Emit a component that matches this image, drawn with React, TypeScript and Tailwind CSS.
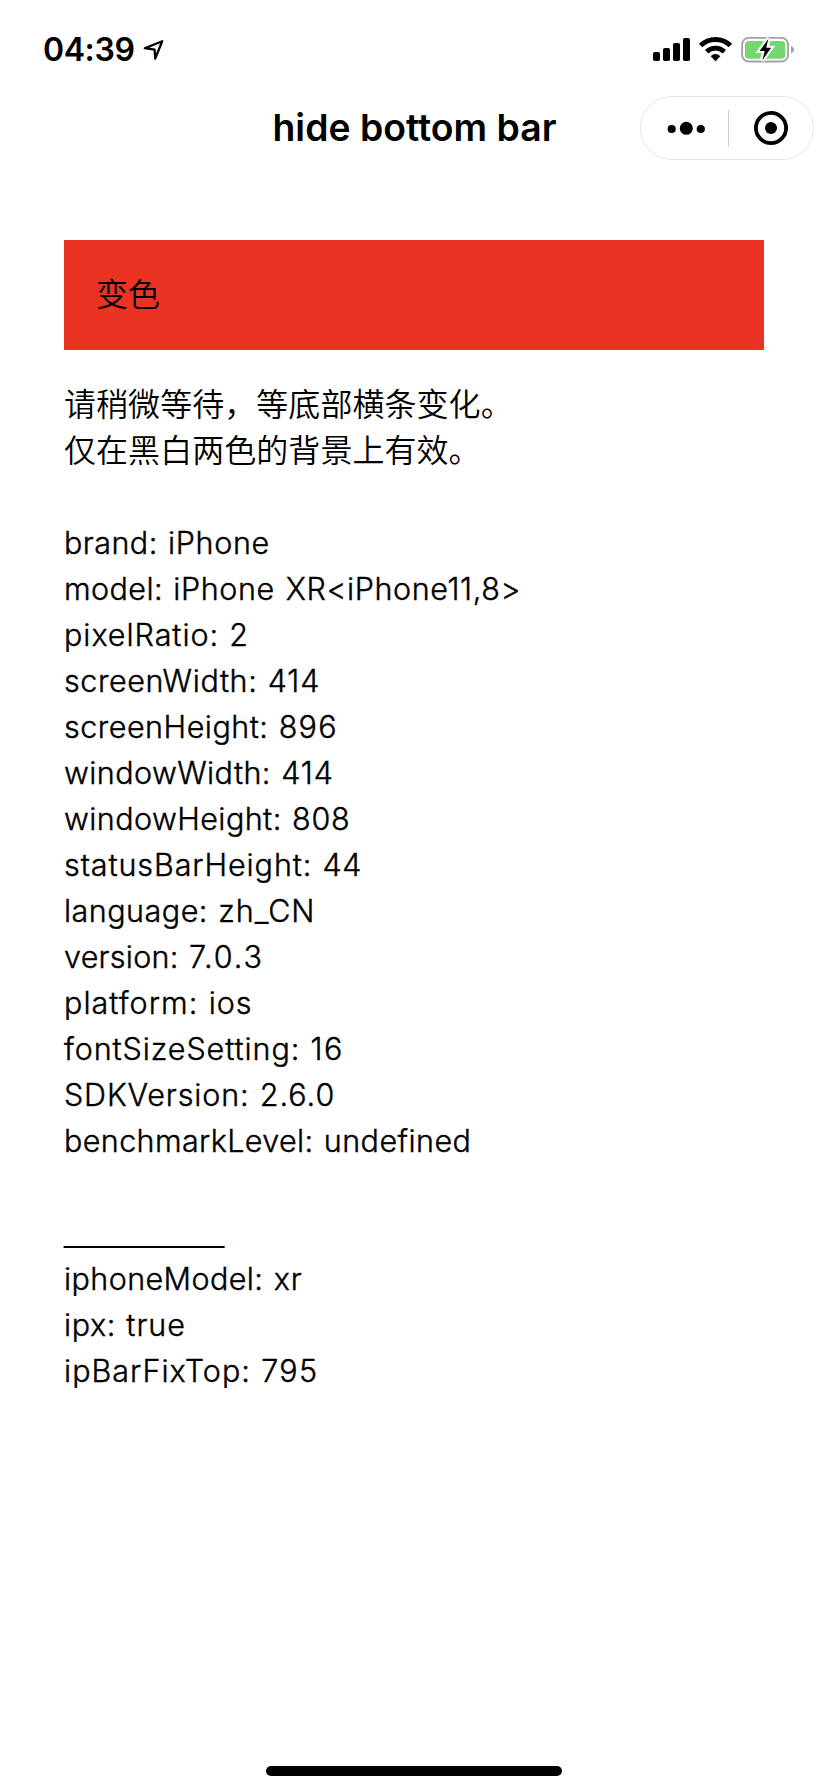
type Field = {
  label: string;
  value: string;
  labelTracking: string;
  valueTracking: string;
};

const systemInfo: Field[] = [
  { label: "brand:", value: "iPhone", labelTracking: "tracking-[0.45px]", valueTracking: "tracking-[0.65px]" },
  { label: "model:", value: "iPhone XR<iPhone11,8>", labelTracking: "tracking-[0.42px]", valueTracking: "tracking-[0.6px]" },
  { label: "pixelRatio:", value: "2", labelTracking: "tracking-[0.95px]", valueTracking: "tracking-normal" },
  { label: "screenWidth:", value: "414", labelTracking: "tracking-[0.6px]", valueTracking: "tracking-[1px]" },
  { label: "screenHeight:", value: "896", labelTracking: "tracking-[0.5px]", valueTracking: "tracking-[1.2px]" },
  { label: "windowWidth:", value: "414", labelTracking: "tracking-[0.42px]", valueTracking: "tracking-[1px]" },
  { label: "windowHeight:", value: "808", labelTracking: "tracking-[0.43px]", valueTracking: "tracking-[0.8px]" },
  { label: "statusBarHeight:", value: "44", labelTracking: "tracking-[0.9px]", valueTracking: "tracking-[0.6px]" },
  { label: "language:", value: "zh_CN", labelTracking: "tracking-[0.48px]", valueTracking: "tracking-[1px]" },
  { label: "version:", value: "7.0.3", labelTracking: "tracking-[0.27px]", valueTracking: "tracking-[1.9px]" },
  { label: "platform:", value: "ios", labelTracking: "tracking-[1.04px]", valueTracking: "tracking-[1px]" },
  { label: "fontSizeSetting:", value: "16", labelTracking: "tracking-[0.92px]", valueTracking: "tracking-[1.4px]" },
  { label: "SDKVersion:", value: "2.6.0", labelTracking: "tracking-[0.85px]", valueTracking: "tracking-[1px]" },
  { label: "benchmarkLevel:", value: "undefined", labelTracking: "tracking-[0.38px]", valueTracking: "tracking-[0.45px]" },
];

const deviceInfo: Field[] = [
  { label: "iphoneModel:", value: "xr", labelTracking: "tracking-[0.41px]", valueTracking: "tracking-[1px]" },
  { label: "ipx:", value: "true", labelTracking: "tracking-[0.6px]", valueTracking: "tracking-[1px]" },
  { label: "ipBarFixTop:", value: "795", labelTracking: "tracking-[1.02px]", valueTracking: "tracking-[1.3px]" },
];

function StatusIcons() {
  return (
    <svg className="h-[27px] w-[142px]" viewBox="653 36 142 27" fill="none">
      <g fill="black">
        <rect x="653" y="52" width="7" height="9" rx="1.8" />
        <rect x="663" y="48" width="7" height="13" rx="1.8" />
        <rect x="673" y="43" width="7" height="18" rx="1.8" />
        <rect x="683" y="38" width="7" height="23" rx="1.8" />
      </g>
      <g stroke="black">
        <path d="M700.6 45.6A21.1 21.1 0 0 1 730.4 45.6" strokeWidth="5" />
        <path d="M706.7 51.7A12.4 12.4 0 0 1 724.3 51.7" strokeWidth="4.8" />
      </g>
      <path d="M715.5 61 711 56.2A6.4 6.4 0 0 1 720 56.2Z" fill="black" stroke="black" strokeWidth="0.6" strokeLinejoin="round" />
      <rect x="742.1" y="37.9" width="46" height="23.6" rx="6.6" stroke="#a3a3a3" strokeWidth="1.9" />
      <path d="M791 46C792.9 46.6 794.1 48 794.1 49.6S792.9 52.8 791 53.3Z" fill="#a3a3a3" />
      <rect x="745" y="41" width="40.3" height="17.7" rx="3.8" fill="#76d672" />
      <path
        d="M768.6 38.5 759.6 50.9H764.4L762 60.6 771.2 47.8H766.6Z"
        fill="white"
        stroke="white"
        strokeWidth="4.2"
        strokeLinejoin="miter"
      />
      <path d="M768.4 38.8 759.6 51H764.7L762.4 60.2 771.2 47.7H766.2Z" fill="black" />
    </svg>
  );
}

function StatusBar() {
  return (
    <header className="flex h-[88px] items-start justify-between pt-[30px] pr-[33px] pl-[43px]">
      <div className="flex items-start">
        <span className="text-[32px] leading-[40px] font-semibold tracking-[-0.4px]">04:39</span>
        <svg className="mt-2 ml-2 h-[24px] w-[24px]" viewBox="0 0 24 24" fill="none">
          <path
            d="M2.8 10.2 20.2 3.2 13.2 20.6 12.6 11.6Z"
            stroke="black"
            strokeWidth="2.3"
            strokeLinejoin="round"
          />
        </svg>
      </div>
      <div className="pt-[6px]">
        <StatusIcons />
      </div>
    </header>
  );
}

function Capsule() {
  return (
    <div className="flex h-16 w-[174px] items-center rounded-full border border-[#e6e6e6]">
      <div className="flex flex-1 justify-center pl-[3px]">
        <svg className="h-[14px] w-[38px]" viewBox="0 0 38 14">
          <circle cx="4.7" cy="8" r="4.1" />
          <circle cx="19.3" cy="7.3" r="6.5" />
          <circle cx="33.8" cy="8" r="4.1" />
        </svg>
      </div>
      <div className="h-[37px] w-px bg-[#cfcfcf]" />
      <div className="flex flex-1 justify-center">
        <svg className="h-[34px] w-[34px]" viewBox="0 0 34 34">
          <circle cx="17" cy="17" r="15.1" fill="none" stroke="black" strokeWidth="3.8" />
          <circle cx="17" cy="17" r="6" />
        </svg>
      </div>
    </div>
  );
}

function NavBar() {
  return (
    <nav className="grid h-20 grid-cols-[1fr_auto_1fr] items-center pr-[14px]">
      <div />
      <h1 className="pl-[15px] text-[37.3px] leading-[50px] font-semibold tracking-[0.02px]">hide bottom bar</h1>
      <div className="flex justify-end">
        <Capsule />
      </div>
    </nav>
  );
}

function InfoList({ fields }: { fields: Field[] }) {
  return (
    <ul className="text-[30.5px] leading-[46px] font-light [-webkit-text-stroke:0.4px_black]">
      {fields.map((f) => (
        <li key={f.label} className="h-[46px] whitespace-nowrap [word-spacing:1.7px]">
          <span className={f.labelTracking}>{f.label}</span> <span className={f.valueTracking}>{f.value}</span>
        </li>
      ))}
    </ul>
  );
}

export default function App() {
  return (
    <div className="flex h-[1792px] w-[828px] flex-col bg-white font-['Inter','Noto_Sans_CJK_SC',sans-serif] text-black">
      <StatusBar />
      <NavBar />
      <main className="flex-1 px-16 pt-[72px] text-[32px] leading-[46px] font-[350]">
        <div className="mb-8 bg-[#eb3323] p-8">变色</div>
        <div className="mb-[46px] tracking-[0.05px]">
          <p>请稍微等待，等底部横条变化。</p>
          <p>仅在黑白两色的背景上有效。</p>
        </div>
        <InfoList fields={systemInfo} />
        <p className="mt-[45px] mb-px h-[46px] font-['Liberation_Sans',sans-serif] text-[28.8px]">__________</p>
        <InfoList fields={deviceInfo} />
      </main>
      <footer className="flex justify-center pb-4">
        <div className="h-[10px] w-[296px] rounded-full bg-black" />
      </footer>
    </div>
  );
}
